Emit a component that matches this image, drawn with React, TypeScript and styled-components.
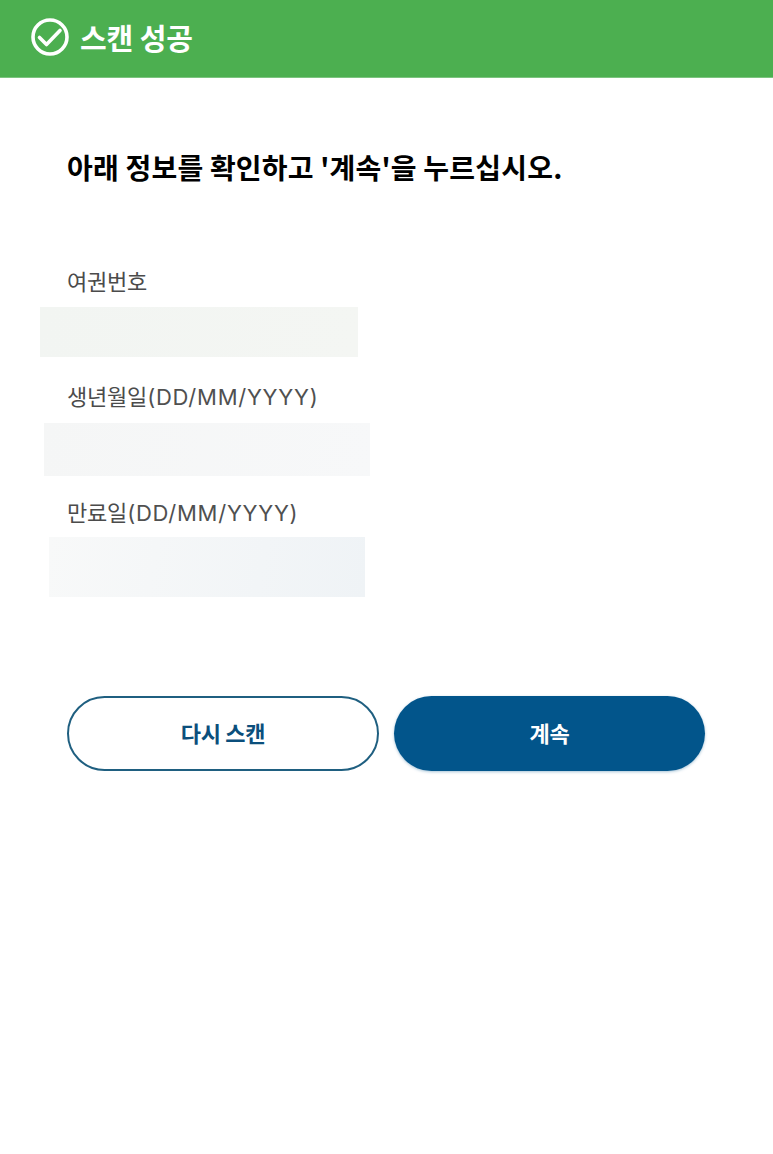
import styled, { createGlobalStyle } from 'styled-components';

const GlobalStyle = createGlobalStyle`
	html, body {
		margin: 0;
		padding: 0;
		background: #fff;
	}
	body {
		font-family: 'Noto Sans CJK KR', 'Noto Sans', sans-serif;
	}
`;

const Page = styled.div`
	width: 773px;
	height: 1154px;
	overflow: hidden;
	background: #fff;
`;

const Header = styled.header`
	display: flex;
	align-items: center;
	gap: 11px;
	height: 78px;
	padding: 0 0 4px 31px;
	box-sizing: border-box;
	background: #4caf50;
	border-bottom: 1px solid #7cc47f;
	color: #fff;
`;

const HeaderTitle = styled.h1`
	margin: 0;
	font-size: 29px;
	line-height: 40px;
	font-weight: 700;
	letter-spacing: -0.1px;
`;

const Content = styled.main`
	display: flex;
	flex-direction: column;
	padding: 71px 67px 0;
`;

const Title = styled.h2`
	margin: 0 0 82px;
	font-size: 28px;
	line-height: 36px;
	font-weight: 700;
	letter-spacing: 0.2px;
	color: #000;
	white-space: nowrap;
`;

const Field = styled.section<{ $gap: number }>`
	display: flex;
	flex-direction: column;
	margin-bottom: ${(props) => props.$gap}px;
`;

const Label = styled.label<{ $gap: number }>`
	height: 30px;
	margin-bottom: ${(props) => props.$gap}px;
	font-size: 22px;
	line-height: 26px;
	font-weight: 400;
	letter-spacing: -0.2px;
	color: #4b4b4b;
	white-space: nowrap;
`;

const DateFormat = styled.span`
	font-family: Inter, sans-serif;
	letter-spacing: 0.75px;
	color: #505050;
`;

// blurred-out values, each one sits a little left of the label
const Redacted = styled.div<{ $shift: number; $width: number; $height: number; $from: string; $to: string }>`
	width: ${(props) => props.$width}px;
	height: ${(props) => props.$height}px;
	margin-left: ${(props) => props.$shift}px;
	background: linear-gradient(100deg, ${(props) => props.$from}, ${(props) => props.$to});
`;

const Buttons = styled.div`
	display: grid;
	grid-template-columns: 312px 311px;
	gap: 15px;
	margin-top: 99px;
`;

const Button = styled.button<{ $primary?: boolean }>`
	height: 75px;
	padding: 0 0 4px;
	box-sizing: border-box;
	border-radius: 38px;
	border: ${(props) => (props.$primary ? 'none' : '2px solid #1f5f80')};
	background: ${(props) => (props.$primary ? '#02558b' : '#fff')};
	color: ${(props) => (props.$primary ? '#fff' : '#0b4f7c')};
	box-shadow: ${(props) => (props.$primary ? '0 1px 3px rgba(2, 85, 139, 0.35)' : 'none')};
	font-family: inherit;
	font-size: 22px;
	font-weight: 700;
	letter-spacing: -0.3px;
`;

const CheckCircle = () => (
	<svg width='38' height='38' viewBox='0 0 38 38' fill='none' stroke='#fff' strokeLinecap='round' strokeLinejoin='round'>
		<circle cx='19' cy='19' r='17' strokeWidth='3.6' />
		<path d='M8.5 19.5 L15.5 26.5 L29 12.5' strokeWidth='3.6' />
	</svg>
);

const App = () => {
	return (
		<Page>
			<GlobalStyle />
			<Header>
				<CheckCircle />
				<HeaderTitle>스캔 성공</HeaderTitle>
			</Header>
			<Content>
				<Title>아래 정보를 확인하고 '계속'을 누르십시오.</Title>
				<Field $gap={25}>
					<Label $gap={10}>여권번호</Label>
					<Redacted $shift={-27} $width={318} $height={50} $from='#f2f5f2' $to='#f4f6f3' />
				</Field>
				<Field $gap={22}>
					<Label $gap={11}>생년월일<DateFormat>(DD/MM/YYYY)</DateFormat></Label>
					<Redacted $shift={-23} $width={326} $height={53} $from='#f5f6f6' $to='#f7f8f9' />
				</Field>
				<Field $gap={0}>
					<Label $gap={9}>만료일<DateFormat>(DD/MM/YYYY)</DateFormat></Label>
					<Redacted $shift={-18} $width={316} $height={60} $from='#f8f9f9' $to='#eff3f6' />
				</Field>
				<Buttons>
					<Button>다시 스캔</Button>
					<Button $primary>계속</Button>
				</Buttons>
			</Content>
		</Page>
	);
};

export default App;
